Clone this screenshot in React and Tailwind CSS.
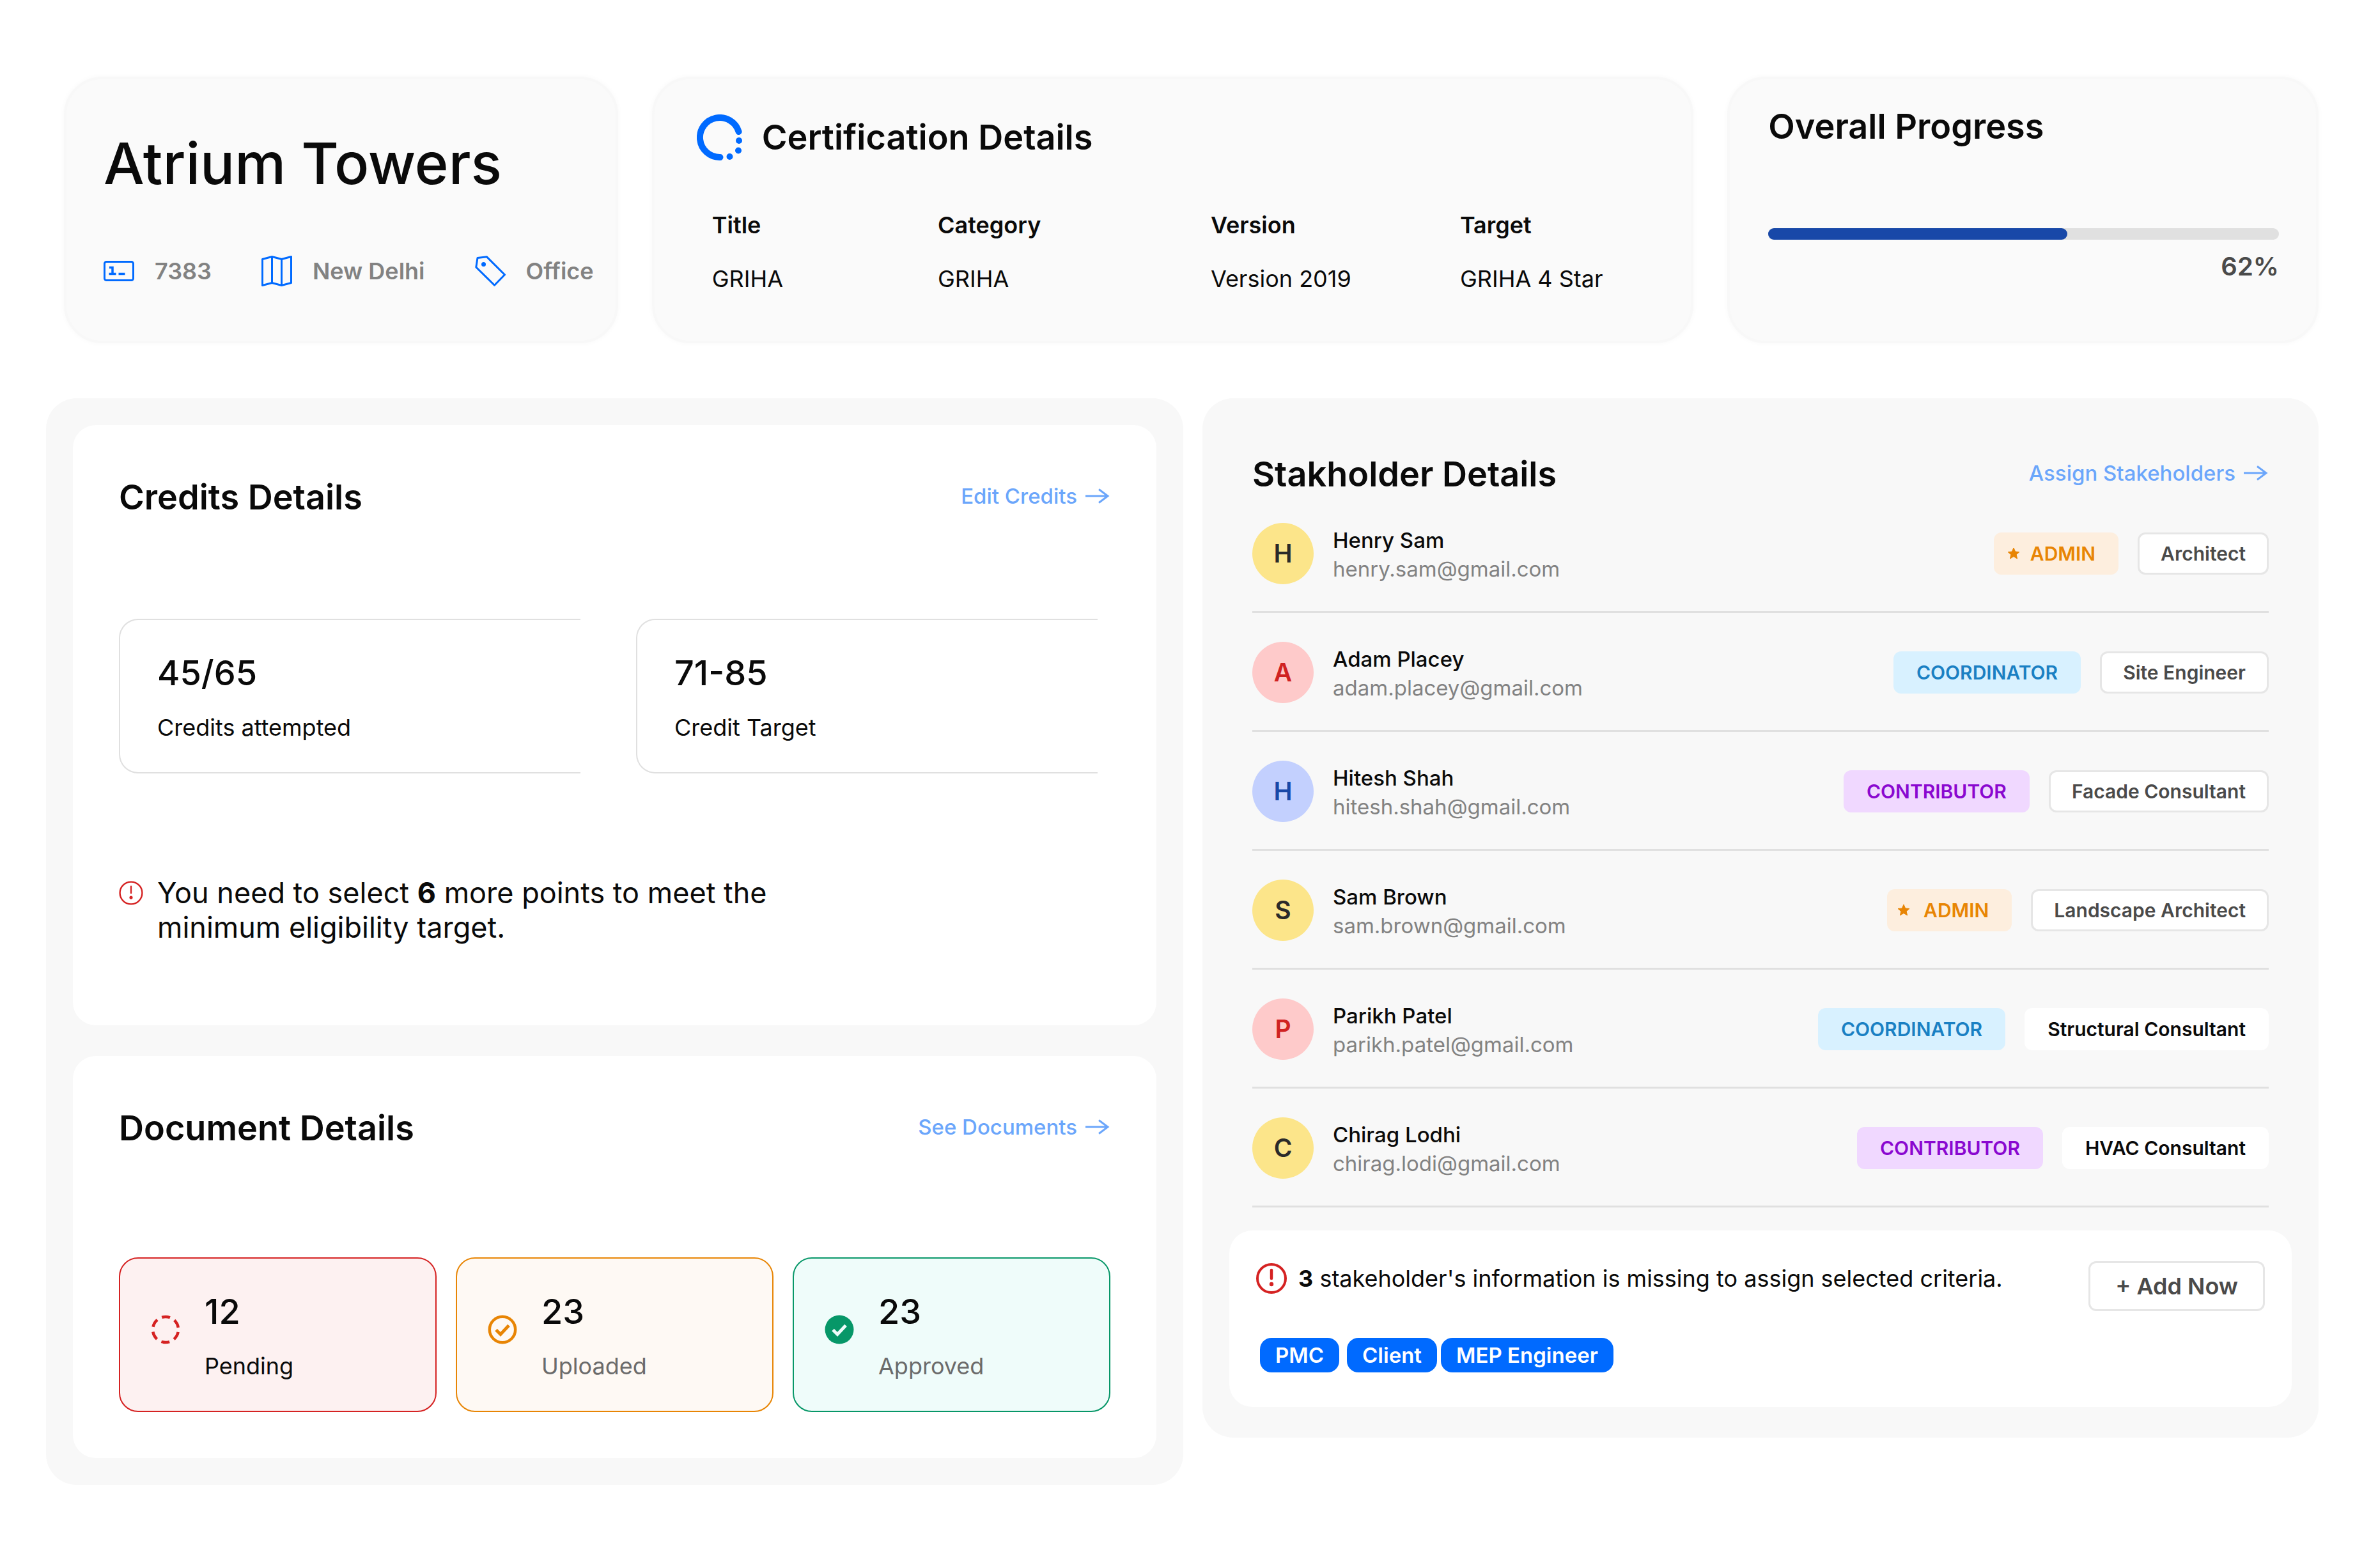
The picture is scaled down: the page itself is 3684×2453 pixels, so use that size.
import React from "react";

const heading = "text-[54px] leading-[81px] font-semibold";
const topCard =
  "rounded-[60px] border-4 border-[#f8f8f8] bg-[#fafafa] shadow-[0_0_8px_rgba(0,0,0,0.03)]";

function IdIcon() {
  return (
    <svg className="size-12 shrink-0" viewBox="0 0 48 48" fill="none" stroke="#006aff" strokeWidth="3" aria-hidden="true">
      <rect x="1.5" y="9.5" width="45" height="29" rx="3" />
      <path d="M9 18.5h5V28M8.5 28.5h11M23.5 28.5h10" strokeWidth="3.5" />
    </svg>
  );
}

function MapIcon() {
  return (
    <svg className="size-12 shrink-0" viewBox="0 0 48 48" fill="none" stroke="#006aff" strokeWidth="3" strokeLinejoin="round" aria-hidden="true">
      <path d="M1.5 5.5 16.5 1.5 31.5 5.5 46.5 1.5V42.5L31.5 46.5 16.5 42.5 1.5 46.5Z" />
      <path d="M16.5 1.5V42.5M31.5 5.5V46.5" />
    </svg>
  );
}

function TagIcon() {
  return (
    <svg className="size-12 shrink-0" viewBox="0 0 48 48" fill="none" stroke="#006aff" strokeWidth="3" strokeLinejoin="round" aria-hidden="true">
      <path d="M4 3.5 18.5 1.8 46.5 29.7 30.5 46.2 1.8 18Z" />
      <circle cx="13.5" cy="13.5" r="3.5" fill="#006aff" stroke="none" />
    </svg>
  );
}

function RingLogo() {
  return (
    <svg className="size-18 shrink-0" viewBox="0 0 72 72" fill="none" aria-hidden="true">
      <path d="M36.5 67A31 31 0 1 1 65.6 27" stroke="#006aff" strokeWidth="10" strokeLinecap="round" />
      <g fill="#006aff">
        <circle cx="66" cy="41" r="5" />
        <circle cx="65" cy="56.5" r="5" />
        <circle cx="51.5" cy="66" r="5" />
      </g>
    </svg>
  );
}

function AlertIcon({ className, thin }) {
  return (
    <svg className={className} viewBox="0 0 48 48" fill="none" stroke="#d52222" aria-hidden="true">
      <circle cx="24" cy="24" r="22" strokeWidth={thin ? 3 : 4} />
      <path d="M24 11v13" strokeWidth={thin ? 3 : 4.5} strokeLinecap="round" />
      <circle cx="24" cy="33" r="3.2" fill="#d52222" stroke="none" />
    </svg>
  );
}

function PendingIcon() {
  return (
    <svg className="size-[54px] shrink-0" viewBox="0 0 54 54" fill="none" aria-hidden="true">
      <circle cx="27" cy="27" r="20" stroke="#d52222" strokeWidth="4.5" strokeDasharray="12.94 8" strokeDashoffset="-4" />
    </svg>
  );
}

function UploadedIcon() {
  return (
    <svg className="size-[54px] shrink-0" viewBox="0 0 54 54" fill="none" stroke="#e88504" strokeWidth="4.5" aria-hidden="true">
      <circle cx="27" cy="27" r="20.2" />
      <path d="M17 27.5l7 7 13-14" strokeWidth="5" />
    </svg>
  );
}

function ApprovedIcon() {
  return (
    <svg className="size-[54px] shrink-0" viewBox="0 0 54 54" fill="none" aria-hidden="true">
      <circle cx="27" cy="27" r="22.5" fill="#079768" />
      <path d="M17 27.5l7 7 13-14" stroke="#effcfa" strokeWidth="5" />
    </svg>
  );
}

function StarIcon() {
  return (
    <svg className="size-5 shrink-0" viewBox="0 0 20 20" fill="#e88504" aria-hidden="true">
      <path
        d="M10 1l2.6 6 6.4.5-4.9 4.2 1.5 6.3L10 14.6 4.4 18l1.5-6.3L1 7.5 7.4 7z"
        stroke="#e88504"
        strokeWidth="1"
        strokeLinejoin="round"
      />
    </svg>
  );
}

function ArrowLink({ children }) {
  return (
    <a href="#" className="flex items-center gap-3 pb-1 text-[33px] leading-[48px] font-medium text-[#6ba6fb]">
      {children}
      <svg className="h-6 w-10" viewBox="0 0 40 24" fill="none" stroke="currentColor" strokeWidth="3" aria-hidden="true">
        <path d="M1 12H36M22 1.5 36 12 22 22.5" />
      </svg>
    </a>
  );
}

const facts = [
  { icon: <IdIcon />, label: "7383" },
  { icon: <MapIcon />, label: "New Delhi" },
  { icon: <TagIcon />, label: "Office" },
];

const certification = [
  { head: "Title", value: "GRIHA", width: "w-[24%]" },
  { head: "Category", value: "GRIHA", width: "w-[29%]" },
  { head: "Version", value: "Version 2019", width: "w-[26.5%]" },
  { head: "Target", value: "GRIHA 4 Star", width: "w-[20.5%]" },
];

const credits = [
  { value: "45/65", label: "Credits attempted" },
  { value: "71-85", label: "Credit Target" },
];

const documents = [
  { value: "12", label: "Pending", icon: <PendingIcon />, box: "border-[#d52222] bg-[#fdf1f1]", text: "text-[#0a0a0a]" },
  { value: "23", label: "Uploaded", icon: <UploadedIcon />, box: "border-[#e88504] bg-[#fef9f4]", text: "text-[#6b6b6b]" },
  { value: "23", label: "Approved", icon: <ApprovedIcon />, box: "border-[#079768] bg-[#effcfa]", text: "text-[#6b6b6b]" },
];

const yellow = "bg-[#fce58a] text-[#2a2a2a]";
const pink = "bg-[#fecaca] text-[#d02222]";
const blue = "bg-[#c3d0fe] text-[#1848a8]";

const outlined = "border-3 border-[#e6e6e6] px-[33px] text-[#4a4a4a]";
const plain = "px-9 text-[#0a0a0a]";

const people = [
  { name: "Henry Sam", mail: "henry.sam@gmail.com", avatar: yellow, role: "ADMIN", star: "pl-[21px] gap-4", job: "Architect", jobStyle: outlined },
  { name: "Adam Placey", mail: "adam.placey@gmail.com", avatar: pink, role: "COORDINATOR", job: "Site Engineer", jobStyle: outlined },
  { name: "Hitesh Shah", mail: "hitesh.shah@gmail.com", avatar: blue, role: "CONTRIBUTOR", job: "Facade Consultant", jobStyle: outlined },
  { name: "Sam Brown", mail: "sam.brown@gmail.com", avatar: yellow, role: "ADMIN", star: "pl-4 gap-[21px]", job: "Landscape Architect", jobStyle: outlined },
  { name: "Parikh Patel", mail: "parikh.patel@gmail.com", avatar: pink, role: "COORDINATOR", job: "Structural Consultant", jobStyle: plain },
  { name: "Chirag Lodhi", mail: "chirag.lodi@gmail.com", avatar: yellow, role: "CONTRIBUTOR", job: "HVAC Consultant", jobStyle: plain },
];

const roleStyle = {
  ADMIN: "bg-[#fdeede] text-[#e88504] pr-9",
  COORDINATOR: "bg-[#d8f1ff] text-[#1a80c3] px-9",
  CONTRIBUTOR: "bg-[#f0d8ff] text-[#8a08d0] px-9",
};

function ProjectCard() {
  return (
    <section className={`${topCard} px-[58px]`}>
      <h1 className="mt-[78px] text-[90px] leading-[108px] font-medium whitespace-nowrap">Atrium Towers</h1>
      <ul className="mt-[87px] flex gap-[78px]">
        {facts.map((f) => (
          <li key={f.label} className="flex items-center gap-8 text-4xl leading-[54px] font-semibold whitespace-nowrap text-[#828282]">
            {f.icon}
            {f.label}
          </li>
        ))}
      </ul>
    </section>
  );
}

function CertificationCard() {
  return (
    <section className={`${topCard} px-[66px] pt-[50px]`}>
      <div className="flex items-center gap-[30px]">
        <RingLogo />
        <h2 className={heading}>Certification Details</h2>
      </div>
      <table className="mt-[70px] ml-6 w-[1472px] max-w-full table-fixed text-left text-4xl leading-[54px]">
        <thead>
          <tr>
            {certification.map((c) => (
              <th key={c.head} className={`${c.width} p-0 font-semibold`}>{c.head}</th>
            ))}
          </tr>
        </thead>
        <tbody>
          <tr>
            {certification.map((c) => (
              <td key={c.head} className="p-0 pt-[30px]">{c.value}</td>
            ))}
          </tr>
        </tbody>
      </table>
    </section>
  );
}

function ProgressCard() {
  return (
    <section className={`${topCard} pt-[33px] pr-[58px] pl-[60px]`}>
      <h2 className={heading}>Overall Progress</h2>
      <div role="progressbar" aria-label="Overall Progress" aria-valuenow={62} aria-valuemin={0} aria-valuemax={100} className="mt-[119px] h-[18px] rounded-full bg-[#e0e0e0]">
        <div className="h-full w-[58.6%] rounded-full bg-[#1848a8]" />
      </div>
      <p className="mt-[10px] text-right text-[40px] leading-[63px] font-semibold text-[#4a4a4a]">62%</p>
    </section>
  );
}

function CreditsCard() {
  return (
    <section className="rounded-[36px] bg-white px-[72px] pt-[72px] pb-[126px]">
      <div className="flex items-center justify-between">
        <h2 className={heading}>Credits Details</h2>
        <ArrowLink>Edit Credits</ArrowLink>
      </div>
      <div className="mt-[150px] grid grid-cols-2 gap-[87px] pr-5">
        {credits.map((c) => (
          <div key={c.label} className="rounded-l-[30px] border-2 border-r-0 border-[#e0e0e0] pt-[50px] pb-12 pl-[58px]">
            <p className="text-[54px] leading-[66px] font-medium">{c.value}</p>
            <p className="mt-[30px] text-4xl leading-11">{c.label}</p>
          </div>
        ))}
      </div>
      <div className="mt-40 flex gap-[22px]">
        <AlertIcon thin className="mt-2 size-[38px] shrink-0" />
        <p className="text-[45px] leading-[54px]">
          You need to select <b className="font-bold">6</b> more points to meet the
          <br />
          minimum eligibility target.
        </p>
      </div>
    </section>
  );
}

function DocumentsCard() {
  return (
    <section className="rounded-[36px] bg-white p-[72px]">
      <div className="flex items-center justify-between">
        <h2 className={heading}>Document Details</h2>
        <ArrowLink>See Documents</ArrowLink>
      </div>
      <div className="mt-[162px] grid grid-cols-3 gap-[30px]">
        {documents.map((d) => (
          <div key={d.label} className={`flex gap-[34px] rounded-[30px] border-2 pt-[50px] pb-12 pl-11 ${d.box}`}>
            <div className="pt-[34px]">{d.icon}</div>
            <div>
              <p className="text-[54px] leading-[66px] font-medium">{d.value}</p>
              <p className={`mt-[30px] text-4xl leading-11 ${d.text}`}>{d.label}</p>
            </div>
          </div>
        ))}
      </div>
    </section>
  );
}

function Person({ person }) {
  return (
    <li className="flex items-center justify-between border-b-3 border-[#e0e0e0] pb-[42px]">
      <div className="flex items-center gap-[30px]">
        <div className={`flex size-24 items-center justify-center rounded-full text-[39px] font-semibold ${person.avatar}`}>
          {person.name[0]}
        </div>
        <div className="pt-1 text-[33px] leading-[45px]">
          <p className="font-medium">{person.name}</p>
          <p className="text-[#828282]">{person.mail}</p>
        </div>
      </div>
      <div className="flex gap-[30px] text-3xl font-semibold">
        <span className={`flex h-[66px] items-center rounded-xl ${roleStyle[person.role]} ${person.star || ""}`}>
          {person.star && <StarIcon />}
          {person.role}
        </span>
        <span className={`flex h-[66px] items-center rounded-xl bg-white ${person.jobStyle}`}>{person.job}</span>
      </div>
    </li>
  );
}

function StakeholdersPanel() {
  const tag = "rounded-[18px] bg-[#006aff] px-6 text-[33px] leading-[54px] font-semibold text-white";
  return (
    <section className="rounded-[48px] bg-[#f8f8f8] px-[42px] pt-[78px] pb-12">
      <div className="px-9">
        <div className="flex items-center justify-between">
          <h2 className={heading}>Stakholder Details</h2>
          <ArrowLink>Assign Stakeholders</ArrowLink>
        </div>
        <ul className="mt-9 flex flex-col gap-[45px]">
          {people.map((p) => (
            <Person key={p.name} person={p} />
          ))}
        </ul>
      </div>
      <div className="mt-9 rounded-[36px] bg-white px-[42px] pt-12 pb-[54px]">
        <div className="flex items-start justify-between">
          <div className="flex items-center gap-[18px]">
            <AlertIcon className="size-12 shrink-0" />
            <p className="text-4xl leading-[54px]">
              <b className="font-bold">3</b> stakeholder's information is missing to assign selected criteria.
            </p>
          </div>
          <button type="button" className="h-[78px] rounded-xl border-3 border-[#e6e6e6] bg-white px-[39px] text-4xl font-semibold text-[#4a4a4a]">
            + Add Now
          </button>
        </div>
        <ul className="mt-[42px] ml-1.5 flex gap-1.5">
          <li className={`${tag} mr-1.5`}>PMC</li>
          <li className={tag}>Client</li>
          <li className={tag}>MEP Engineer</li>
        </ul>
      </div>
    </section>
  );
}

export default function App() {
  return (
    <main className="bg-white pt-[120px] pr-[57px] pb-32 pl-[72px] font-['Inter',sans-serif] text-[#0a0a0a]">
      <div className="grid grid-cols-[minmax(0,867fr)_minmax(0,1630fr)_minmax(0,925fr)] gap-[53px] pl-7 [&>section]:min-h-[417px]">
        <ProjectCard />
        <CertificationCard />
        <ProgressCard />
      </div>
      <div className="mt-[86px] grid grid-cols-[1779fr_1746fr] items-start gap-[30px]">
        <div className="flex flex-col gap-12 rounded-[48px] bg-[#f8f8f8] p-[42px]">
          <CreditsCard />
          <DocumentsCard />
        </div>
        <StakeholdersPanel />
      </div>
    </main>
  );
}
